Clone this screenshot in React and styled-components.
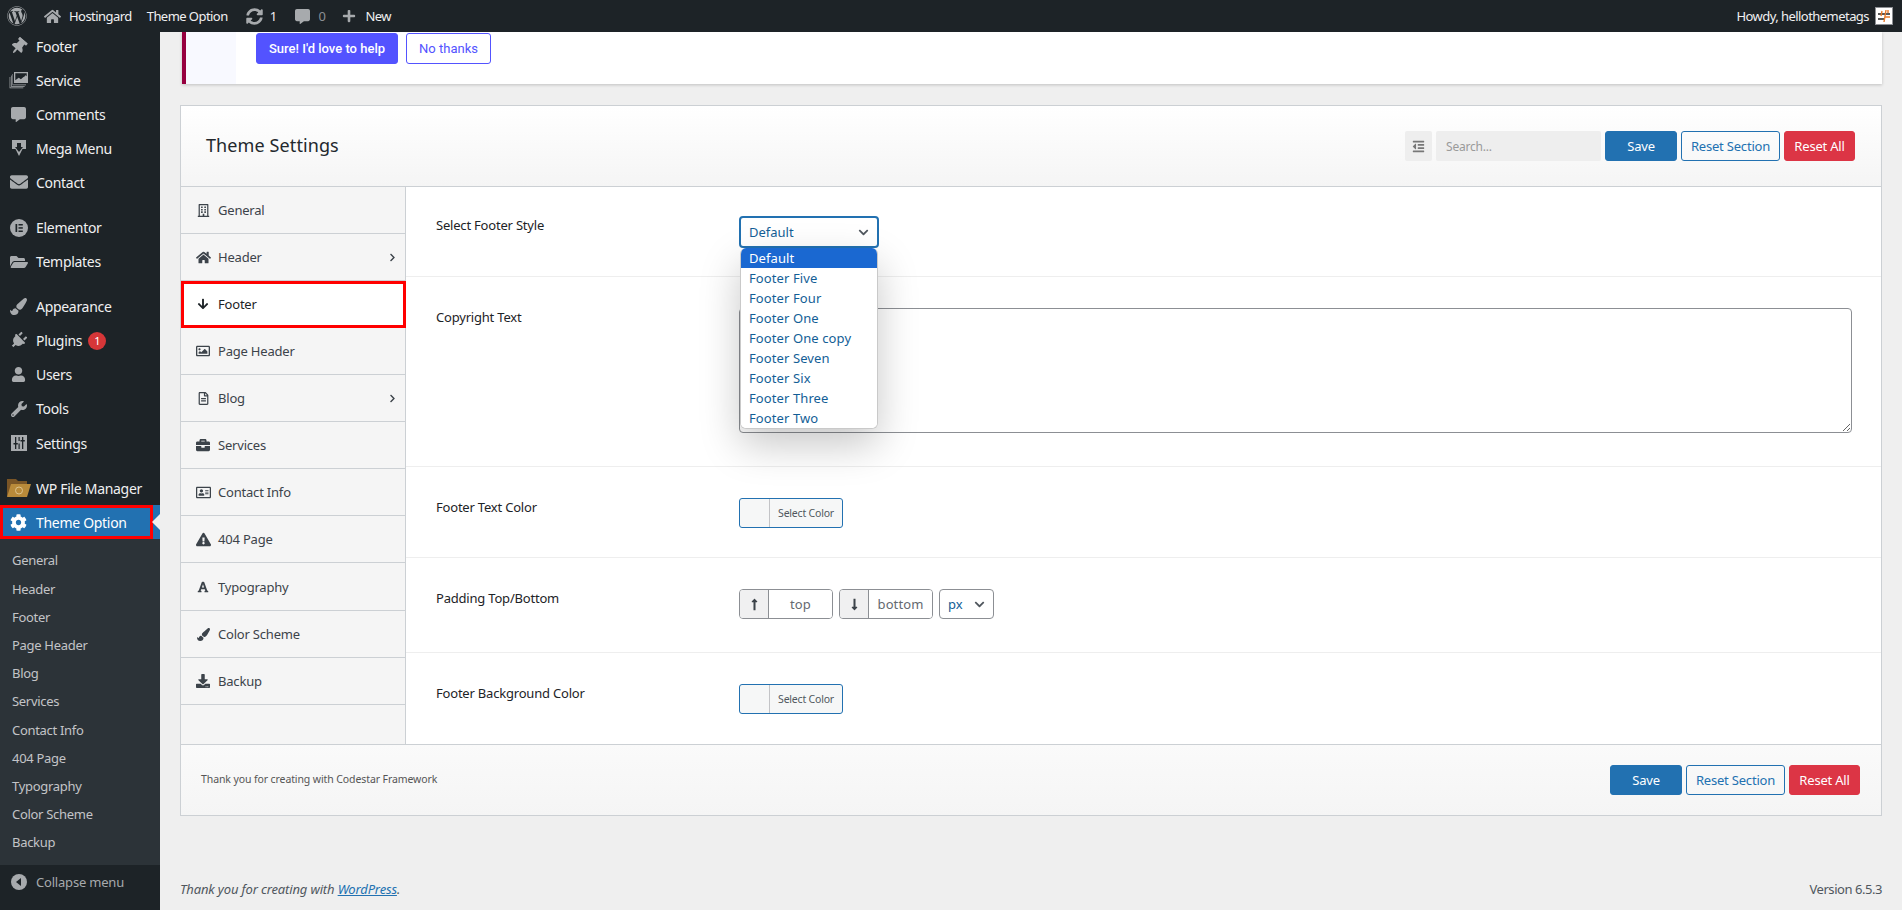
import React from 'react'
import styled, { createGlobalStyle } from 'styled-components'
import {
  FaWordpress, FaHome, FaSyncAlt, FaCommentAlt, FaPlus, FaThumbtack, FaEnvelope, FaFolderOpen,
  FaPaintBrush, FaPlug, FaUser, FaWrench, FaCog, FaRegBuilding, FaArrowDown, FaRegImage, FaRegFileAlt,
  FaBriefcase, FaRegAddressCard, FaExclamationTriangle, FaFont, FaDownload, FaChevronRight, FaChevronDown,
  FaOutdent, FaLongArrowAltUp, FaLongArrowAltDown,
} from 'react-icons/fa'

const GlobalStyle = createGlobalStyle`
  html, body { margin: 0; padding: 0; height: 100%; overflow: hidden; background: #efefef; }
  body { font-family: "Noto Sans", "Open Sans", sans-serif; font-size: 13px; color: #3c434a; }
  * { box-sizing: border-box; }
`

const ServiceIcon = () => (
  <svg width="20" height="20" viewBox="0 0 20 20" fill="currentColor">
    <path d="M5 2h14v11H5V2zm1.300 1.300v7l3.400-2.600 2.200 1.600 4.600-4 1.200 1V3.300H6.300z" />
    <circle cx="14.500" cy="5.500" r="1.300" fill="#1d2327" />
    <path d="M3.500 4H4v10.500h13v.8H3.500V4zM2 5.500h.7V16h13v.8H2V5.500zM.6 7h.7v10.500h13v.8H.6V7z" />
  </svg>
)

const MegaIcon = () => (
  <svg width="20" height="20" viewBox="0 0 20 20">
    <path d="M3 2h14v9h-3.500L10 18l-3.500-7H3z" fill="currentColor" />
    <path d="M8 5h4v4h2l-4 5-4-5h2z" fill="#1d2327" />
  </svg>
)

const ElementorIcon = () => (
  <svg width="18" height="18" viewBox="0 0 18 18">
    <circle cx="9" cy="9" r="9" fill="currentColor" />
    <rect x="5.500" y="5" width="1.700" height="8" fill="#1d2327" />
    <rect x="8.500" y="5" width="4.300" height="1.500" fill="#1d2327" />
    <rect x="8.500" y="8.200" width="4.300" height="1.500" fill="#1d2327" />
    <rect x="8.500" y="11.500" width="4.300" height="1.500" fill="#1d2327" />
  </svg>
)

const SettingsIcon = () => (
  <svg width="18" height="18" viewBox="0 0 18 18">
    <rect x="1" y="1" width="16" height="16" fill="currentColor" />
    <path d="M5 3h1.300v6H7.800v1.400H6.300V15H5v-4.600H3.500V9H5zM12 3h1.300v3h1.500v1.400h-1.500V15H12V7.400h-1.500V6H12z" fill="#1d2327" />
    <path d="M8.500 9.500h1.200V15H8.500zM8.500 3h1.200v4H8.500z" fill="#1d2327" />
  </svg>
)

const FileManagerIcon = () => (
  <svg width="26" height="20" viewBox="0 0 26 20">
    <path d="M1 1h9l2 2h9v15H1z" fill="#7a5526" />
    <path d="M5 6h20l-4 13H1z" fill="#b98a3a" />
    <circle cx="13" cy="12.500" r="3.500" fill="none" stroke="#dcc38f" strokeWidth="1" />
  </svg>
)

const CollapseIcon = () => (
  <svg width="16" height="16" viewBox="0 0 16 16">
    <circle cx="8" cy="8" r="8" fill="currentColor" />
    <path d="M10 4v8L5 8z" fill="#1d2327" />
  </svg>
)

const Avatar = () => (
  <svg width="18" height="18" viewBox="0 0 18 18">
    <rect x="0.500" y="0.500" width="17" height="17" fill="#fff" stroke="#8c8f94" />
    <path d="M3 7h12M3 12h6" stroke="#222" strokeWidth="1.400" />
    <path d="M11 3L9 15M7 4L6 9" stroke="#e8792b" strokeWidth="1.400" />
    <path d="M10 10h5M13 3v3" stroke="#e8792b" strokeWidth="1.400" />
  </svg>
)

const Page = styled.div`
  width: 1902px;
  height: 910px;
  display: flex;
  flex-direction: column;
  overflow: hidden;
  background: #efefef;
`

const AdminBar = styled.header`
  height: 32px;
  flex: none;
  background: #1d2327;
  color: #f0f0f1;
  display: flex;
  align-items: center;
  justify-content: space-between;
  padding: 0 9px 0 7px;
  position: relative;
  z-index: 3;
`

const BarGroup = styled.div`
  display: flex;
  align-items: center;
`

const BarItem = styled.span`
  display: inline-flex;
  align-items: center;
  gap: ${p => p.$gap || 7}px;
  margin-left: ${p => p.$left || 0}px;
  color: ${p => p.$muted ? '#8c8f94' : '#f0f0f1'};
  font-size: 13px;
  white-space: nowrap;
  letter-spacing: -0.55px;
  svg { color: #a7aaad; flex: none; }
`

const Body = styled.div`
  flex: 1;
  display: flex;
  min-height: 0;
`

const Sidebar = styled.nav`
  width: 160px;
  flex: none;
  background: #1d2327;
  display: flex;
  flex-direction: column;
  overflow: hidden;
`

const MenuList = styled.div`
  margin-top: -3px;
`

const MenuItem = styled.div`
  height: 34.1px;
  display: flex;
  align-items: center;
  position: relative;
  margin-bottom: ${p => p.$sep ? 11 : 0}px;
  color: ${p => p.$active ? '#fff' : '#f0f0f1'};
  background: ${p => p.$active ? '#2271b1' : 'transparent'};
  font-size: 14px;
  letter-spacing: -0.3px;
  white-space: nowrap;
  ${p => p.$active && `
    outline: 3px solid #f00;
    outline-offset: -3px;
    margin-right: 7px;
    &::before {
      content: '';
      position: absolute;
      right: -7px;
      top: 0;
      width: 7px;
      height: 100%;
      background: #2271b1;
    }
    &::after {
      content: '';
      position: absolute;
      right: -7px;
      top: 9px;
      border: 8px solid transparent;
      border-right-color: #efefef;
      border-left: 0;
    }
  `}
`

const MenuIcon = styled.span`
  width: 36px;
  flex: none;
  display: flex;
  align-items: center;
  justify-content: center;
  color: ${p => p.$active ? '#fff' : '#a7aaad'};
  padding-left: 1px;
  svg { transform: rotate(${p => p.$tilt || 0}deg); }
`

const Badge = styled.span`
  width: 18px;
  height: 18px;
  border-radius: 50%;
  background: #d63638;
  color: #fff;
  font-size: 11px;
  display: inline-flex;
  align-items: center;
  justify-content: center;
  margin-left: 6px;
`

const SubMenu = styled.div`
  background: #2c3338;
  padding: 7px 0 6px;
  flex: 1;
`

const SubItem = styled.div`
  height: 28.2px;
  display: flex;
  align-items: center;
  padding-left: 12px;
  font-size: 13px;
  letter-spacing: -0.3px;
  color: #c3c4c7;
`

const Collapse = styled.div`
  height: 45px;
  flex: none;
  display: flex;
  align-items: center;
  color: #a7aaad;
  font-size: 13px;
  letter-spacing: -0.2px;
  padding-bottom: 12px;
`

const Main = styled.main`
  flex: 1;
  min-width: 0;
  padding: 0 20px;
  display: flex;
  flex-direction: column;
`

const Notice = styled.div`
  height: 52px;
  flex: none;
  margin: 0 0 21px 2px;
  display: flex;
  background: #fff;
  border-left: 4px solid #96003f;
  box-shadow: 0 1px 3px rgba(0, 0, 0, 0.2);
`

const NoticeSide = styled.div`
  width: 50px;
  background: #f8f9ff;
  flex: none;
`

const NoticeActions = styled.div`
  display: flex;
  gap: 8px;
  padding: 1px 0 0 20px;
`

const NoticeButton = styled.span`
  height: 31px;
  display: inline-flex;
  align-items: center;
  justify-content: center;
  width: ${p => p.$width}px;
  border-radius: 3px;
  border: 1px solid #5353ff;
  background: ${p => p.$filled ? '#5353ff' : '#fff'};
  color: ${p => p.$filled ? '#fff' : '#5353ff'};
  font-family: Roboto, sans-serif;
  font-weight: ${p => p.$filled ? 500 : 400};
  font-size: 13px;
`

const Panel = styled.section`
  border: 1px solid #ccd0d4;
  background: #fff;
  flex: none;
`

const PanelHeader = styled.div`
  height: 81px;
  display: flex;
  align-items: center;
  justify-content: space-between;
  padding: 0 26px 0 25px;
  background: linear-gradient(#fff, #f5f5f5);
  border-bottom: 1px solid #ccd0d4;
`

const Title = styled.h1`
  margin: 0 0 2px;
  font-size: 18px;
  font-weight: 400;
  letter-spacing: 0.1px;
  color: #23282d;
`

const Actions = styled.div`
  display: flex;
  align-items: center;
  gap: 4px;
`

const ToggleBox = styled.span`
  width: 27px;
  height: 30px;
  display: flex;
  align-items: center;
  justify-content: center;
  background: #eee;
  color: #777;
  border-radius: 2px;
`

const SearchInput = styled.input`
  width: 165px;
  height: 30px;
  border: 0;
  padding: 0 10px;
  background: #eee;
  border-radius: 2px;
  font: 12px "Noto Sans", sans-serif;
  letter-spacing: -0.2px;
  outline: none;
  &::placeholder { color: #9a9a9a; opacity: 1; }
`

const ActionButton = styled.span`
  height: 30px;
  width: ${p => p.$width}px;
  display: inline-flex;
  align-items: center;
  justify-content: center;
  border-radius: 3px;
  font-size: 13px;
  letter-spacing: -0.2px;
  border: 1px solid ${p => p.$kind === 'danger' ? '#dc3545' : '#2271b1'};
  background: ${p => p.$kind === 'danger' ? '#dc3545' : p.$kind === 'primary' ? '#2271b1' : 'transparent'};
  color: ${p => p.$kind === 'outline' ? '#2271b1' : '#fff'};
`

const PanelBody = styled.div`
  display: flex;
`

const TabList = styled.div`
  width: 225px;
  flex: none;
  background: #f5f5f5;
  border-right: 1px solid #ccd0d4;
`

const Tab = styled.div`
  height: ${p => p.$height || 47}px;
  display: flex;
  align-items: center;
  padding: 0 8px 0 14px;
  gap: 7px;
  font-size: 13px;
  letter-spacing: -0.2px;
  border-bottom: 1px solid #ccd0d4;
  color: ${p => p.$active ? '#1d2327' : '#3c434a'};
  background: ${p => p.$active ? '#fff' : 'transparent'};
  ${p => p.$active && `
    outline: 3px solid #f00;
    outline-offset: -3px;
    margin-right: -1px;
    border-bottom: 0;
    padding-bottom: 2px;
  `}
`

const TabIcon = styled.span`
  width: 16px;
  display: flex;
  justify-content: center;
  flex: none;
`

const TabLabel = styled.span`
  flex: 1;
`

const Fields = styled.div`
  flex: 1;
  min-width: 0;
`

const Field = styled.div`
  height: ${p => p.$height}px;
  display: grid;
  grid-template-columns: 303px 1fr;
  padding: ${p => p.$top || 30}px 29px 0 30px;
  border-bottom: ${p => p.$last ? 0 : '1px solid #eee'};
`

const FieldLabel = styled.label`
  font-size: 13px;
  letter-spacing: -0.2px;
  font-weight: 400;
  color: #1d2327;
  line-height: 18px;
`

const SelectWrap = styled.div`
  position: relative;
  width: 140px;
`

const SelectBox = styled.div`
  height: 32px;
  border: 2px solid #2271b1;
  border-radius: 4px;
  display: flex;
  align-items: center;
  justify-content: space-between;
  padding: 0 8px;
  color: #135e96;
  font-size: 13px;
  letter-spacing: 0;
  svg { color: #50575e; }
`

const OptionList = styled.div`
  position: absolute;
  top: 32px;
  left: 1px;
  width: 138px;
  background: #fff;
  border-radius: 6px;
  overflow: hidden;
  border: 1px solid #c9c9c9;
  border-top: 0;
  box-shadow: 0 16px 40px rgba(0, 0, 0, 0.22);
  z-index: 2;
`

const Option = styled.div`
  height: 20px;
  line-height: 20px;
  padding-left: 8px;
  font-size: 13px;
  letter-spacing: 0.1px;
  color: ${p => p.$selected ? '#fff' : '#135e96'};
  background: ${p => p.$selected ? '#1a68d1' : '#fff'};
`

const TextArea = styled.textarea`
  width: 100%;
  height: 125px;
  display: block;
  border: 1px solid #8c8f94;
  border-radius: 4px;
  background: #fff;
  outline: none;
`

const ColorButton = styled.div`
  width: 104px;
  height: 30px;
  display: flex;
  border: 1px solid #2271b1;
  border-radius: 3px;
  background: #f6f7f7;
  overflow: hidden;
`

const Swatch = styled.span`
  width: 30px;
  flex: none;
  border-right: 1px solid #c3c4c7;
`

const ColorText = styled.span`
  flex: 1;
  font-size: 10.500px;
  letter-spacing: -0.2px;
  color: #50575e;
  display: flex;
  align-items: center;
  justify-content: center;
`

const SpacingRow = styled.div`
  display: flex;
  gap: 6px;
`

const InputGroup = styled.div`
  width: ${p => p.$width}px;
  height: 30px;
  display: flex;
  border: 1px solid #8c8f94;
  border-radius: 4px;
  overflow: hidden;
`

const Addon = styled.span`
  width: 29px;
  flex: none;
  display: flex;
  align-items: center;
  justify-content: center;
  background: #f0f0f1;
  border-right: 1px solid #8c8f94;
  color: #3c434a;
`

const GroupInput = styled.input`
  flex: 1;
  min-width: 0;
  border: 0;
  outline: none;
  text-align: center;
  font: 13px "Noto Sans", sans-serif;
  letter-spacing: 0.1px;
  &::placeholder { color: #646970; opacity: 1; }
`

const UnitSelect = styled.div`
  width: 55px;
  height: 30px;
  border: 1px solid #8c8f94;
  border-radius: 4px;
  display: flex;
  align-items: center;
  justify-content: space-between;
  padding: 0 8px;
  color: #135e96;
  font-size: 13px;
  svg { color: #50575e; }
`

const PanelFooter = styled.div`
  height: 71px;
  display: flex;
  align-items: center;
  justify-content: space-between;
  padding: 0 21px 0 20px;
  background: linear-gradient(#fafafa, #f5f5f5);
  border-top: 1px solid #ccd0d4;
`

const FooterNote = styled.span`
  font-size: 10.500px;
  letter-spacing: -0.1px;
  color: #555;
  padding-bottom: 2px;
`

const WpFooter = styled.footer`
  flex: 1;
  display: flex;
  align-items: flex-end;
  justify-content: space-between;
  padding-bottom: 12px;
  color: #50575e;
  font-size: 13px;
  letter-spacing: -0.15px;
`

const Thanks = styled.em`
  a { color: #2271b1; }
`

const Version = styled.span`
  letter-spacing: -0.45px;
`

const topMenu = [
  { label: 'Footer', icon: <FaThumbtack size={17} />, tilt: 40 },
  { label: 'Service', icon: <ServiceIcon /> },
  { label: 'Comments', icon: <FaCommentAlt size={15} /> },
  { label: 'Mega Menu', icon: <MegaIcon /> },
  { label: 'Contact', icon: <FaEnvelope size={18} />, sep: true },
  { label: 'Elementor', icon: <ElementorIcon /> },
  { label: 'Templates', icon: <FaFolderOpen size={18} />, sep: true },
  { label: 'Appearance', icon: <FaPaintBrush size={17} /> },
  { label: 'Plugins', icon: <FaPlug size={17} />, tilt: 45, badge: 1 },
  { label: 'Users', icon: <FaUser size={15} /> },
  { label: 'Tools', icon: <FaWrench size={16} />, tilt: 0 },
  { label: 'Settings', icon: <SettingsIcon />, sep: true },
  { label: 'WP File Manager', icon: <FileManagerIcon /> },
]

const subMenu = ['General', 'Header', 'Footer', 'Page Header', 'Blog', 'Services', 'Contact Info', '404 Page', 'Typography', 'Color Scheme', 'Backup']

const tabs = [
  { label: 'General', icon: <FaRegBuilding size={13} /> },
  { label: 'Header', icon: <FaHome size={15} />, more: true },
  { label: 'Footer', icon: <FaArrowDown size={12} />, active: true },
  { label: 'Page Header', icon: <FaRegImage size={14} /> },
  { label: 'Blog', icon: <FaRegFileAlt size={13} />, more: true },
  { label: 'Services', icon: <FaBriefcase size={14} /> },
  { label: 'Contact Info', icon: <FaRegAddressCard size={15} /> },
  { label: '404 Page', icon: <FaExclamationTriangle size={15} /> },
  { label: 'Typography', icon: <FaFont size={12} />, height: 48 },
  { label: 'Color Scheme', icon: <FaPaintBrush size={13} /> },
  { label: 'Backup', icon: <FaDownload size={14} /> },
]

const options = ['Default', 'Footer Five', 'Footer Four', 'Footer One', 'Footer One copy', 'Footer Seven', 'Footer Six', 'Footer Three', 'Footer Two']

const ButtonSet = () => (
  <>
    <ActionButton $kind="primary" $width={72}>Save</ActionButton>
    <ActionButton $kind="outline" $width={99}>Reset Section</ActionButton>
    <ActionButton $kind="danger" $width={71}>Reset All</ActionButton>
  </>
)

const PickColor = () => (
  <ColorButton>
    <Swatch />
    <ColorText>Select Color</ColorText>
  </ColorButton>
)

export default function App() {
  return (
    <Page>
      <GlobalStyle />
      <AdminBar>
        <BarGroup>
          <BarItem><FaWordpress size={20} /></BarItem>
          <BarItem $left={17} $gap={8}><FaHome size={17} />Hostingard</BarItem>
          <BarItem $left={15}>Theme Option</BarItem>
          <BarItem $left={18} $gap={7}><FaSyncAlt size={17} />1</BarItem>
          <BarItem $left={18} $muted $gap={9}><FaCommentAlt size={15} />0</BarItem>
          <BarItem $left={17} $gap={9}><FaPlus size={14} />New</BarItem>
        </BarGroup>
        <BarItem $gap={6}>Howdy, hellothemetags <Avatar /></BarItem>
      </AdminBar>
      <Body>
        <Sidebar>
          <MenuList>
            {topMenu.map(item => (
              <MenuItem key={item.label} $sep={item.sep}>
                <MenuIcon $tilt={item.tilt}>{item.icon}</MenuIcon>
                {item.label}
                {item.badge && <Badge>{item.badge}</Badge>}
              </MenuItem>
            ))}
            <MenuItem $active>
              <MenuIcon $active><FaCog size={17} /></MenuIcon>
              Theme Option
            </MenuItem>
          </MenuList>
          <SubMenu>
            {subMenu.map(label => <SubItem key={label}>{label}</SubItem>)}
          </SubMenu>
          <Collapse>
            <MenuIcon><CollapseIcon /></MenuIcon>
            Collapse menu
          </Collapse>
        </Sidebar>
        <Main>
          <Notice>
            <NoticeSide />
            <NoticeActions>
              <NoticeButton $filled $width={142}>Sure! I'd love to help</NoticeButton>
              <NoticeButton $width={85}>No thanks</NoticeButton>
            </NoticeActions>
          </Notice>
          <Panel>
            <PanelHeader>
              <Title>Theme Settings</Title>
              <Actions>
                <ToggleBox><FaOutdent size={13} /></ToggleBox>
                <SearchInput placeholder="Search..." readOnly />
                <ButtonSet />
              </Actions>
            </PanelHeader>
            <PanelBody>
              <TabList>
                {tabs.map(tab => (
                  <Tab key={tab.label} $active={tab.active} $height={tab.height}>
                    <TabIcon>{tab.icon}</TabIcon>
                    <TabLabel>{tab.label}</TabLabel>
                    {tab.more && <FaChevronRight size={9} />}
                  </Tab>
                ))}
              </TabList>
              <Fields>
                <Field $height={90} $top={29}>
                  <FieldLabel>Select Footer Style</FieldLabel>
                  <SelectWrap>
                    <SelectBox>Default <FaChevronDown size={11} /></SelectBox>
                    <OptionList>
                      {options.map((o, i) => <Option key={o} $selected={i === 0}>{o}</Option>)}
                    </OptionList>
                  </SelectWrap>
                </Field>
                <Field $height={190} $top={31}>
                  <FieldLabel>Copyright Text</FieldLabel>
                  <TextArea readOnly />
                </Field>
                <Field $height={91} $top={31}>
                  <FieldLabel>Footer Text Color</FieldLabel>
                  <PickColor />
                </Field>
                <Field $height={95} $top={31}>
                  <FieldLabel>Padding Top/Bottom</FieldLabel>
                  <SpacingRow>
                    <InputGroup $width={94}>
                      <Addon><FaLongArrowAltUp size={13} /></Addon>
                      <GroupInput placeholder="top" readOnly />
                    </InputGroup>
                    <InputGroup $width={94}>
                      <Addon><FaLongArrowAltDown size={13} /></Addon>
                      <GroupInput placeholder="bottom" readOnly />
                    </InputGroup>
                    <UnitSelect>px <FaChevronDown size={11} /></UnitSelect>
                  </SpacingRow>
                </Field>
                <Field $height={91} $top={31} $last>
                  <FieldLabel>Footer Background Color</FieldLabel>
                  <PickColor />
                </Field>
              </Fields>
            </PanelBody>
            <PanelFooter>
              <FooterNote>Thank you for creating with Codestar Framework</FooterNote>
              <Actions><ButtonSet /></Actions>
            </PanelFooter>
          </Panel>
          <WpFooter>
            <Thanks>Thank you for creating with <a href="#wp">WordPress</a>.</Thanks>
            <Version>Version 6.5.3</Version>
          </WpFooter>
        </Main>
      </Body>
    </Page>
  )
}
